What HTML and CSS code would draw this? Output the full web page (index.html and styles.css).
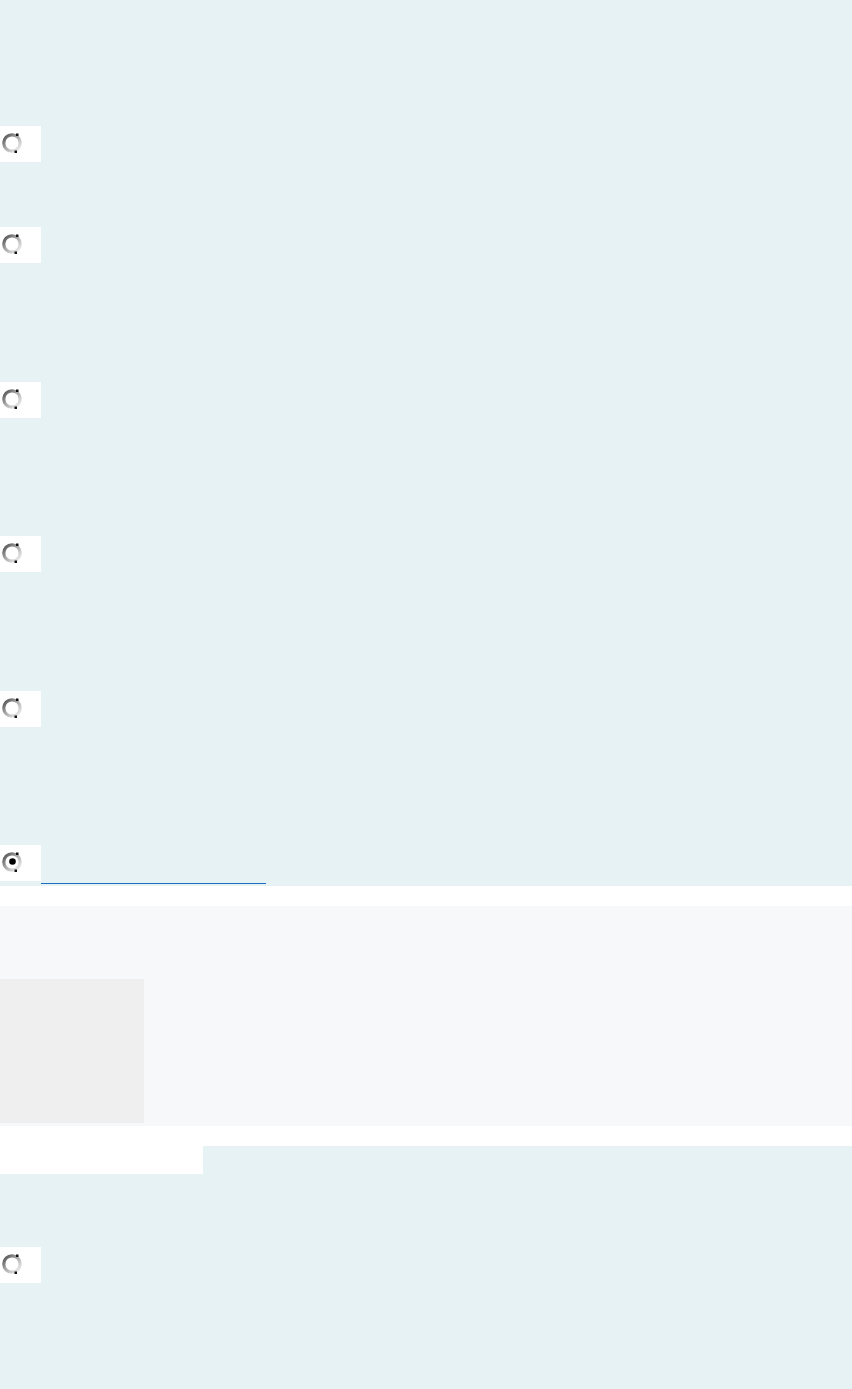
FILE: index.html
```html
<!DOCTYPE html>
<html lang="en">
<head>
  <meta charset="UTF-8" />
  <meta name="viewport" content="width=device-width, initial-scale=1.0"/>
  <title>Question</title>
  <link rel="stylesheet" href="styles.css">
</head>
<body>

<svg class="defs" width="0" height="0" aria-hidden="true">
  <defs>
    <linearGradient id="ring" x1="0" y1="0" x2="1" y2="1">
      <stop offset="0" stop-color="#4a4a4a"/>
      <stop offset="0.45" stop-color="#a8a8a8"/>
      <stop offset="1" stop-color="#f6f6f6"/>
    </linearGradient>
    <g id="radio-ring">
      <circle cx="10" cy="10" r="8.2" fill="#fff" stroke="url(#ring)" stroke-width="3.2"/>
      <rect x="14" y="0.5" width="2.5" height="2.5" fill="#111"/>
      <rect x="12.5" y="17.5" width="2.5" height="2.5" fill="#111"/>
    </g>
  </defs>
</svg>

<section class="question">
  <div class="options">
    <div class="option option-first">
      <span class="radio"><svg width="20" height="20"><use href="#radio-ring"/></svg></span>
    </div>
    <div class="option">
      <span class="radio"><svg width="20" height="20"><use href="#radio-ring"/></svg></span>
    </div>
    <div class="option">
      <span class="radio"><svg width="20" height="20"><use href="#radio-ring"/></svg></span>
    </div>
    <div class="option">
      <span class="radio"><svg width="20" height="20"><use href="#radio-ring"/></svg></span>
    </div>
    <div class="option">
      <span class="radio"><svg width="20" height="20"><use href="#radio-ring"/></svg></span>
    </div>
    <div class="option">
      <span class="radio"><svg width="20" height="20"><use href="#radio-ring"/><circle cx="10.5" cy="9.5" r="3.3" fill="#000"/></svg></span>
      <span class="option-label selected"></span>
    </div>
  </div>
</section>

<section class="explain">
  <div class="explain-media"></div>
</section>

<section class="question question-next">
  <div class="question-tab"></div>
  <div class="option">
    <span class="radio"><svg width="20" height="20"><use href="#radio-ring"/></svg></span>
  </div>
</section>

</body>
</html>
```

FILE: styles.css
```css
:root {
  --question-bg: #e6f2f4;
  --panel-bg: #f6f8fa;
  --media-bg: #efefef;
  --link-color: #1b6ec2;
}

* {
  box-sizing: border-box;
  margin: 0;
  padding: 0;
}

body {
  font-family: 'Liberation Sans', Arial, sans-serif;
  background: #fff;
  min-height: 100vh;
}

.defs {
  position: absolute;
}

.question {
  background-color: var(--question-bg);
  height: 886px;
  padding-top: 126px;
}

.options {
  display: flex;
  flex-direction: column;
  gap: 118.5px;
}

.option {
  display: flex;
  align-items: flex-start;
}

.option-first {
  margin-bottom: -53.5px;
}

.radio {
  display: block;
  width: 41px;
  height: 36px;
  background: #fff;
  padding: 7px 0 0 2px;
}

.radio svg {
  display: block;
}

.option-label {
  display: block;
  width: 225px;
  height: 39px;
}

.option-label.selected {
  border-bottom: 1px solid var(--link-color);
}

.explain {
  margin-top: 20px;
  height: 220px;
  padding-top: 73px;
  background-color: var(--panel-bg);
}

.explain-media {
  width: 144px;
  height: 144px;
  background-color: var(--media-bg);
}

.question-next {
  margin-top: 20px;
  height: 243px;
  padding-top: 0;
}

.question-tab {
  width: 203px;
  height: 28px;
  background: #fff;
  margin-bottom: 73px;
}
```
